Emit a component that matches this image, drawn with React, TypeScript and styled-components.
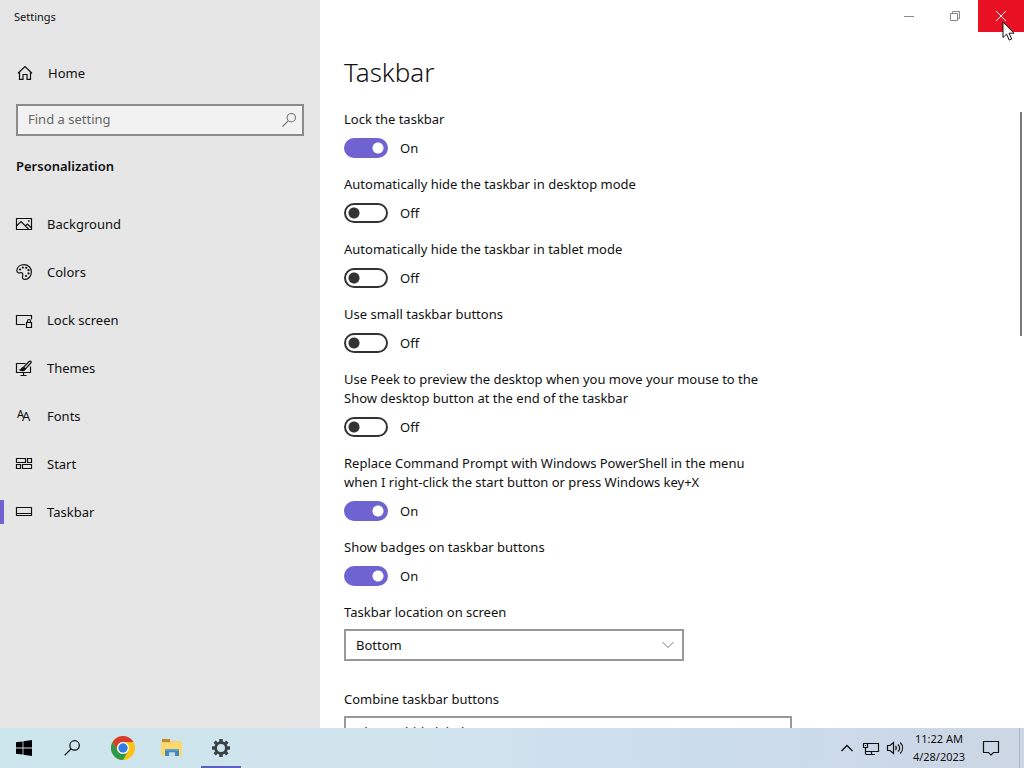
import React, { useState } from "react";
import styled, { createGlobalStyle, css } from "styled-components";

const GlobalStyle = createGlobalStyle`
  *, *::before, *::after { box-sizing: border-box; }
  html, body, #root { height: 100%; margin: 0; }
  body {
    font-family: "Noto Sans", "Open Sans", sans-serif;
    font-size: 13px;
    line-height: 19px;
    color: #111;
    background: #fff;
    overflow: hidden;
  }
  button, input, select { font: inherit; color: inherit; }
`;

const Desktop = styled.div`
  display: flex;
  flex-direction: column;
  height: 100vh;
`;

const SettingsWindow = styled.div`
  display: flex;
  flex: 1;
  min-height: 0;
  background: #fff;
`;

const Sidebar = styled.aside`
  flex: 0 0 320px;
  background: #e6e6e6;
  overflow: hidden;
`;

const WindowTitle = styled.div`
  height: 32px;
  padding-left: 14px;
  font-size: 11px;
  line-height: 33px;
`;

const HomeLink = styled.a`
  display: flex;
  align-items: center;
  gap: 14px;
  height: 48px;
  margin-top: 17px;
  padding-left: 16px;
  color: inherit;
  text-decoration: none;
`;

const SearchBox = styled.label`
  display: flex;
  align-items: center;
  height: 32px;
  margin: 7px 16px 0;
  padding: 0 5px 0 10px;
  border: 2px solid #8b8b8b;
  background: #f2f2f2;
  color: #777;
`;

const SearchInput = styled.input`
  flex: 1;
  min-width: 0;
  height: 28px;
  padding: 0 0 2px;
  border: 0;
  outline: 0;
  background: transparent;
  &::placeholder { color: #666; opacity: 1; }
`;

const SectionHeading = styled.h2`
  margin: 21px 16px 0;
  font-size: 13px;
  font-weight: 600;
  line-height: 19px;
`;

const NavList = styled.nav`
  display: flex;
  flex-direction: column;
  margin-top: 24px;
`;

const NavItem = styled.a<{ $active?: boolean }>`
  display: flex;
  align-items: center;
  height: 48px;
  line-height: 20px;
  color: inherit;
  text-decoration: none;
  &::before {
    content: "";
    width: 4px;
    height: 24px;
    margin-right: 12px;
    background: ${(p) => (p.$active ? "#6f63d2" : "transparent")};
  }
  & > svg { margin-right: 15px; }
`;

const Main = styled.main`
  position: relative;
  flex: 1;
  min-width: 0;
  overflow: hidden;
`;

const WindowControls = styled.div`
  display: flex;
  justify-content: flex-end;
  height: 32px;
`;

const WindowButton = styled.button<{ $close?: boolean }>`
  position: relative;
  display: flex;
  align-items: center;
  justify-content: center;
  width: 46px;
  height: 32px;
  padding: 0;
  border: 0;
  color: ${(p) => (p.$close ? "#fff" : "#888")};
  background: ${(p) => (p.$close ? "#e81123" : "transparent")};
`;

const Cursor = styled.svg`
  position: absolute;
  left: 24px;
  top: 21px;
  z-index: 1;
`;

const Content = styled.div`
  padding: 22px 24px 0;
`;

const PageTitle = styled.h1`
  margin: 0 0 20px;
  font-size: 26px;
  font-weight: 300;
  line-height: 36px;
`;

const Setting = styled.div`
  display: flex;
  flex-direction: column;
  align-items: flex-start;
  margin-bottom: 17px;
`;

const SettingLabel = styled.label`
  max-width: 430px;
`;

const ToggleRow = styled.div`
  display: flex;
  align-items: center;
  gap: 12px;
  height: 20px;
  margin-top: 9px;
  line-height: 20px;
`;

const Switch = styled.input`
  appearance: none;
  width: 44px;
  height: 20px;
  margin: 0;
  border: 2px solid #333;
  border-radius: 10px;
  background: radial-gradient(circle at 8px 8px, #333 5px, transparent 6px);
  &:checked {
    border-color: #6f63d2;
    background: radial-gradient(circle at 32px 8px, #fff 5px, #6f63d2 6px);
  }
`;

const SelectSetting = styled(Setting)`
  gap: 7px;
  margin-bottom: 29px;
`;

const SelectFrame = styled.div<{ $wide?: boolean }>`
  display: grid;
  align-items: center;
  width: 100%;
  max-width: ${(p) => (p.$wide ? 448 : 340)}px;
  & > * { grid-area: 1 / 1; }
  & > svg { justify-self: end; margin-right: 10px; pointer-events: none; }
`;

const Select = styled.select`
  appearance: none;
  width: 100%;
  height: 32px;
  padding: 0 32px 0 10px;
  border: 2px solid #999;
  border-radius: 0;
  background: #fff;
`;

const ScrollThumb = styled.div`
  position: absolute;
  top: 112px;
  right: 2px;
  width: 2px;
  height: 224px;
  background: #7a7a7a;
`;

const Taskbar = styled.footer`
  display: flex;
  flex: 0 0 40px;
  justify-content: space-between;
  background: linear-gradient(90deg, #cde5ed 0%, #d0e4ee 40%, #cbdcec 70%, #ccd6e4 100%);
`;

const TaskbarGroup = styled.div`
  display: flex;
`;

const PinnedApps = styled(TaskbarGroup)`
  gap: 1px;
  margin-left: 3px;
`;

const barButton = css`
  display: flex;
  align-items: center;
  justify-content: center;
  height: 40px;
  padding: 0;
  border: 0;
  background: transparent;
`;

const AppButton = styled.button<{ $active?: boolean }>`
  ${barButton}
  width: 48px;
  ${(p) =>
    p.$active &&
    css`
      background: linear-gradient(#5c5fbe, #5c5fbe) center bottom / 40px 2px no-repeat;
    `}
`;

const TrayButton = styled.button`
  ${barButton}
  width: 24px;
`;

const Clock = styled.button`
  ${barButton}
  flex-direction: column;
  width: 64px;
  font-size: 11px;
  line-height: 18px;
`;

const ActionCenter = styled.button`
  ${barButton}
  width: 40px;
`;

const ShowDesktop = styled.button`
  ${barButton}
  width: 5px;
  margin-left: 8px;
  border-left: 1px solid #aab6c4;
`;

type IconProps = { w?: number; h?: number; children: React.ReactNode; sw?: number };
const Icon = ({ w = 16, h = 16, sw = 1, children }: IconProps) => (
  <svg
    width={w}
    height={h}
    viewBox={`0 0 ${w} ${h}`}
    fill="none"
    stroke="currentColor"
    strokeWidth={sw}
    overflow="visible"
    aria-hidden="true"
  >
    {children}
  </svg>
);

const HomeIcon = () => (
  <Icon w={18} sw={1.2}>
    <path d="M2 8.200 9 1.500l7 6.700M3.500 7v7.400H7V9.500h4v4.900h3.500V7" />
  </Icon>
);

const BackgroundIcon = () => (
  <Icon sw={1.2}>
    <path d="M.5 2.500h15v11H.5zM.5 10l4.500-4.500 7.500 7.500M9.500 10l2-2 4 4" />
    <path d="M12 5h1.500" strokeWidth="1.500" />
  </Icon>
);

const ColorsIcon = () => (
  <Icon sw={1.2}>
    <path d="M.8 6.500C1.200 3 4.200.6 8 .6c4.200 0 7.400 3.200 7.400 7.200 0 4.400-3 7.600-6.200 7.600-2.400 0-3-1.200-2.700-2.800.4-1.700.9-2.600-.3-3.600-1.500-1.200-2.400.4-3.700-.1C1.200 8.400.7 7.600.8 6.500z" />
    <g fill="currentColor" stroke="none">
      <circle cx="4" cy="5.500" r="1.100" />
      <circle cx="6.800" cy="3.600" r="1.100" />
      <circle cx="10.200" cy="3.800" r="1.100" />
      <circle cx="12.500" cy="6.200" r="1.100" />
      <circle cx="12.500" cy="9.400" r="1.100" />
      <circle cx="10" cy="12" r="1.100" />
    </g>
  </Icon>
);

const LockScreenIcon = () => (
  <Icon sw={1.2}>
    <path d="M9 12.500H.5v-9h15v4" />
    <path d="M10.500 10.500h5v5h-5zM11.500 10.500V9a1.500 1.500 0 0 1 3 0v1.500" />
  </Icon>
);

const ThemesIcon = () => (
  <Icon sw={1.2}>
    <path d="M9.500 3.500h-9v9h14v-6M7.500 12.500v2.500M4.500 15.500h6" />
    <path d="M14.700 1.200c.8.500.6 1.200.1 1.800L9.400 9 7.500 7.300l5.600-5.800c.5-.5 1-.6 1.600-.3z" />
    <path d="M7.300 7.500C5.600 7.500 5.800 9.500 4 10c1.700 1.100 4.900.8 5.200-1.200z" fill="currentColor" />
  </Icon>
);

const FontsIcon = () => (
  <Icon>
    <g fill="currentColor" stroke="none" fontFamily="Noto Sans, sans-serif">
      <text x="1" y="10" fontSize="11">A</text>
      <text x="6" y="13" fontSize="13">A</text>
    </g>
  </Icon>
);

const StartIcon = () => (
  <Icon sw={1.2}>
    <path d="M.5 2.500h9v4h-9zM11.500 2.500h4v4h-4zM.5 8.500h4v4h-4zM6.500 8.500h9v4h-9z" />
  </Icon>
);

const TaskbarIcon = () => (
  <Icon sw={1.2}>
    <path d="M.5 3.500h15v8H.5zM.5 9.500h15" />
  </Icon>
);

const SearchIcon = ({ size = 16 }: { size?: number }) => (
  <svg width={size} height={size} viewBox="0 0 16 16" fill="none" stroke="currentColor" strokeWidth="1.100" aria-hidden="true">
    <circle cx="10.300" cy="5.700" r="4.200" />
    <path d="M7.200 8.800 1.500 14.500" />
  </svg>
);

const ChevronDown = () => (
  <Icon w={12} h={8}>
    <path d="m.5 1 5.500 5.500L11.500 1" stroke="#777" />
  </Icon>
);

const WindowsLogo = () => (
  <svg width="16" height="16" viewBox="0 0 16 16" fill="#000" aria-hidden="true">
    <path d="M0 2.300 6.600 1.400v6.200H0zM7.400 1.300 16 .1v7.500H7.400zM0 8.400h6.600v6.200L0 13.700zM7.400 8.400H16v7.500l-8.600-1.200z" />
  </svg>
);

const ChromeLogo = () => (
  <svg width="24" height="24" viewBox="0 0 24 24" aria-hidden="true">
    <circle cx="12" cy="12" r="12" fill="#fbc116" />
    <path d="M1.600 6A12 12 0 0 1 22.400 6H12a6 6 0 0 0-5.200 9z" fill="#da3b30" />
    <path d="M1.600 6A12 12 0 0 0 12 24l5.200-9A6 6 0 0 1 6.800 15z" fill="#2b9a4b" />
    <circle cx="12" cy="12" r="6" fill="#fff" />
    <circle cx="12" cy="12" r="4.700" fill="#2f7de1" />
  </svg>
);

const FolderLogo = () => (
  <svg width="22" height="20" viewBox="0 0 22 20" aria-hidden="true">
    <path d="M1 1.500h8.500v1.700H20V17H1z" fill="#f3c95c" />
    <path d="M1 1h8v3H1z" fill="#bd8d2c" />
    <path d="M0 5h9l1.500-1.500H21V17.500H0z" fill="#fbd970" />
    <path d="M4 18v-6.500h14V18h-4v-3.500H8V18z" fill="#4788bb" />
    <path d="M8 14.500h6V18H8z" fill="#c4dcec" />
    <path d="M4 12.800 5.500 11h11l1.500 1.800z" fill="#5ba2d4" />
  </svg>
);

const GearLogo = () => (
  <svg width="20" height="20" viewBox="-10 -10 20 20" fill="none" stroke="#394145" aria-hidden="true">
    <circle r="5.400" strokeWidth="2.800" />
    {[0, 45, 90, 135, 180, 225, 270, 315].map((a) => (
      <path key={a} d="M0-5.800V-9" strokeWidth="3.400" transform={`rotate(${a})`} />
    ))}
  </svg>
);

const NetworkIcon = () => (
  <Icon w={18} sw={1.2}>
    <path d="M5.500 3.500h11v8h-12.500M3.500 7.500v7M4 14.500h9M9.500 11.500v3M1.500 3.500h4v4h-4z" />
    <path d="M3 5.500h1" />
  </Icon>
);

const VolumeIcon = () => (
  <Icon w={18} sw={1.2}>
    <path d="M1.500 5.500H4l3.500-3v11l-3.500-3H1.500z" />
    <path d="M9.500 6c1 1.200 1 2.800 0 4M12 4.300c2 2.200 2 5.200 0 7.400M14.300 2.500c3 3.300 3 7.700 0 11" />
  </Icon>
);

const navItems = [
  { name: "Background", icon: <BackgroundIcon /> },
  { name: "Colors", icon: <ColorsIcon /> },
  { name: "Lock screen", icon: <LockScreenIcon /> },
  { name: "Themes", icon: <ThemesIcon /> },
  { name: "Fonts", icon: <FontsIcon /> },
  { name: "Start", icon: <StartIcon /> },
  { name: "Taskbar", icon: <TaskbarIcon /> },
];

const toggles = [
  { id: "lock", label: "Lock the taskbar", on: true },
  { id: "hide-desktop", label: "Automatically hide the taskbar in desktop mode", on: false },
  { id: "hide-tablet", label: "Automatically hide the taskbar in tablet mode", on: false },
  { id: "small", label: "Use small taskbar buttons", on: false },
  {
    id: "peek",
    label: "Use Peek to preview the desktop when you move your mouse to the Show desktop button at the end of the taskbar",
    on: false,
  },
  {
    id: "powershell",
    label: "Replace Command Prompt with Windows PowerShell in the menu when I right-click the start button or press Windows key+X",
    on: true,
  },
  { id: "badges", label: "Show badges on taskbar buttons", on: true },
];

const ToggleSetting = ({ id, label, on }: { id: string; label: string; on: boolean }) => {
  const [checked, setChecked] = useState(on);
  return (
    <Setting>
      <SettingLabel htmlFor={id}>{label}</SettingLabel>
      <ToggleRow>
        <Switch id={id} type="checkbox" role="switch" checked={checked} onChange={() => setChecked(!checked)} />
        <span>{checked ? "On" : "Off"}</span>
      </ToggleRow>
    </Setting>
  );
};

export default function App() {
  return (
    <Desktop>
      <GlobalStyle />
      <SettingsWindow>
        <Sidebar>
          <WindowTitle>Settings</WindowTitle>
          <HomeLink href="#home">
            <HomeIcon />
            Home
          </HomeLink>
          <SearchBox>
            <SearchInput type="text" placeholder="Find a setting" aria-label="Find a setting" />
            <SearchIcon />
          </SearchBox>
          <SectionHeading>Personalization</SectionHeading>
          <NavList>
            {navItems.map((item) => (
              <NavItem key={item.name} href={`#${item.name}`} $active={item.name === "Taskbar"}>
                {item.icon}
                {item.name}
              </NavItem>
            ))}
          </NavList>
        </Sidebar>
        <Main>
          <WindowControls>
            <WindowButton aria-label="Minimize">
              <Icon w={10} h={10}><path d="M0 5.500h10" /></Icon>
            </WindowButton>
            <WindowButton aria-label="Restore">
              <Icon w={10} h={10}><path d="M.5 2.500h7v7h-7zM2.500 2.500v-2h7v7h-2" /></Icon>
            </WindowButton>
            <WindowButton $close aria-label="Close">
              <Icon w={10} h={10}><path d="m0 0 10 10M10 0 0 10" /></Icon>
              <Cursor width="13" height="21" viewBox="0 0 13 21" aria-hidden="true">
                <path d="M1 1v15.500l3.600-3.400 2.600 6 2.500-1.100-2.600-5.800H12z" fill="#fff" stroke="#111" />
              </Cursor>
            </WindowButton>
          </WindowControls>
          <Content>
            <PageTitle>Taskbar</PageTitle>
            {toggles.map((t) => (
              <ToggleSetting key={t.id} {...t} />
            ))}
            <SelectSetting>
              <SettingLabel htmlFor="location">Taskbar location on screen</SettingLabel>
              <SelectFrame>
                <Select id="location" defaultValue="Bottom">
                  <option>Left</option>
                  <option>Top</option>
                  <option>Right</option>
                  <option>Bottom</option>
                </Select>
                <ChevronDown />
              </SelectFrame>
            </SelectSetting>
            <SelectSetting>
              <SettingLabel htmlFor="combine">Combine taskbar buttons</SettingLabel>
              <SelectFrame $wide>
                <Select id="combine">
                  <option>Always, hide labels</option>
                  <option>When taskbar is full</option>
                  <option>Never</option>
                </Select>
                <ChevronDown />
              </SelectFrame>
            </SelectSetting>
          </Content>
          <ScrollThumb />
        </Main>
      </SettingsWindow>
      <Taskbar>
        <TaskbarGroup>
          <AppButton aria-label="Start"><WindowsLogo /></AppButton>
          <AppButton aria-label="Search"><SearchIcon size={18} /></AppButton>
          <PinnedApps>
            <AppButton aria-label="Chrome"><ChromeLogo /></AppButton>
            <AppButton aria-label="File Explorer"><FolderLogo /></AppButton>
            <AppButton $active aria-label="Settings"><GearLogo /></AppButton>
          </PinnedApps>
        </TaskbarGroup>
        <TaskbarGroup>
          <TrayButton aria-label="Show hidden icons">
            <Icon w={12} h={8} sw={1.3}><path d="m.5 7 5.500-5.500L11.500 7" /></Icon>
          </TrayButton>
          <TrayButton aria-label="Network"><NetworkIcon /></TrayButton>
          <TrayButton aria-label="Volume"><VolumeIcon /></TrayButton>
          <Clock>
            <span>11:22 AM</span>
            <span>4/28/2023</span>
          </Clock>
          <ActionCenter aria-label="Notifications">
            <Icon w={18} h={18} sw={1.2}><path d="M1.500 2.500h15v11h-5L9 16l-2.500-2.500h-5z" /></Icon>
          </ActionCenter>
          <ShowDesktop aria-label="Show desktop" />
        </TaskbarGroup>
      </Taskbar>
    </Desktop>
  );
}
